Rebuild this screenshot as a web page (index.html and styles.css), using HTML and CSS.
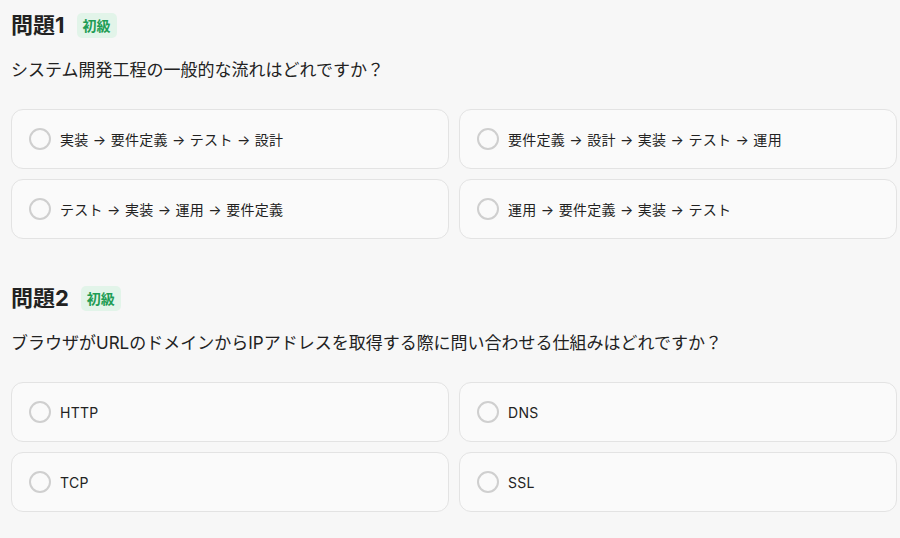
FILE: index.html
```html
<!DOCTYPE html>
<html lang="ja">
<head>
<meta charset="utf-8">
<link rel="stylesheet" href="styles.css">
</head>
<body>
<main class="page">
  <section class="question">
    <div class="q-head">
      <h2 class="q-title">問題1</h2>
      <span class="badge">初級</span>
    </div>
    <p class="q-text">システム開発工程の一般的な流れはどれですか？</p>
    <div class="options">
      <label class="option"><span class="radio"></span><span class="opt-text">実装 → 要件定義 → テスト → 設計</span></label>
      <label class="option"><span class="radio"></span><span class="opt-text">要件定義 → 設計 → 実装 → テスト → 運用</span></label>
      <label class="option"><span class="radio"></span><span class="opt-text">テスト → 実装 → 運用 → 要件定義</span></label>
      <label class="option"><span class="radio"></span><span class="opt-text">運用 → 要件定義 → 実装 → テスト</span></label>
    </div>
  </section>
  <section class="question">
    <div class="q-head">
      <h2 class="q-title">問題2</h2>
      <span class="badge">初級</span>
    </div>
    <p class="q-text">ブラウザがURLのドメインからIPアドレスを取得する際に問い合わせる仕組みはどれですか？</p>
    <div class="options">
      <label class="option"><span class="radio"></span><span class="opt-text">HTTP</span></label>
      <label class="option"><span class="radio"></span><span class="opt-text">DNS</span></label>
      <label class="option"><span class="radio"></span><span class="opt-text">TCP</span></label>
      <label class="option"><span class="radio"></span><span class="opt-text">SSL</span></label>
    </div>
  </section>
</main>
</body>
</html>
```
FILE: styles.css
```css
* { box-sizing: border-box; }
html, body {
  margin: 0;
  background: #f7f7f7;
}
body {
  font-family: Inter, "Noto Sans CJK JP", sans-serif;
  color: #222;
}
.page {
  padding: 11px 3px 0 11px;
  display: flex;
  flex-direction: column;
  gap: 45px;
}
.q-head {
  display: flex;
  align-items: center;
  gap: 12px;
  height: 28px;
}
.q-title {
  margin: 0;
  font-size: 22px;
  font-weight: 700;
  line-height: 28px;
  color: #222;
}
.badge {
  display: inline-flex;
  align-items: center;
  justify-content: center;
  height: 25px;
  padding: 0 6px;
  border-radius: 5px;
  background: #e2f4e9;
  color: #1f9d55;
  font-size: 14px;
  font-weight: 700;
}
.q-text {
  margin: 19px 0 0;
  font-size: 17px;
  line-height: 24px;
  color: #222;
}
.options {
  margin-top: 27px;
  display: grid;
  grid-template-columns: 1fr 1fr;
  gap: 10px;
}
.option {
  display: flex;
  align-items: center;
  gap: 9px;
  height: 60px;
  padding-left: 17px;
  background: #fafafa;
  border: 1px solid #e3e3e3;
  border-radius: 12px;
  font-size: 14px;
  letter-spacing: 0.02em;
  color: #222;
}
.radio {
  width: 22px;
  height: 22px;
  border: 2px solid #cfcfcf;
  border-radius: 50%;
  background: #fafafa;
  flex: none;
}
```
